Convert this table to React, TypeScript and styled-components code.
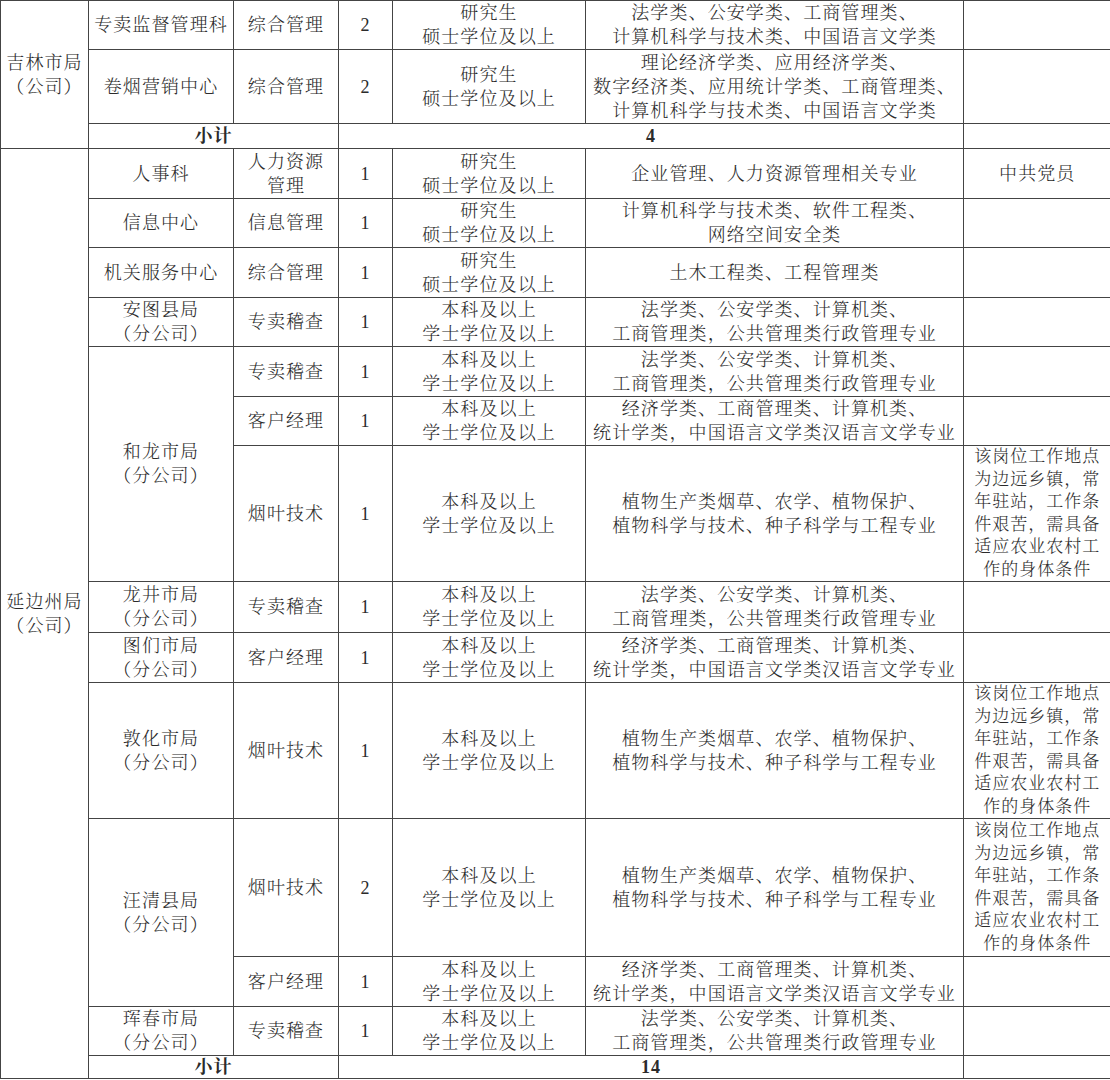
import React from "react";
import styled, { createGlobalStyle } from "styled-components";

const Global = createGlobalStyle`
body{
  margin:0;
  background:#fff;
}
`
const Sheet = styled.table`
width:1110px;
table-layout:fixed;
border-collapse:collapse;
font-family:"Liberation Serif","Noto Serif CJK SC","Noto Sans CJK SC",serif;
color:#2b2b2b;
`
const Row = styled.tr<{h:number}>`
height:${props=>props.h}px;
`
const Cell = styled.td<{bold?:boolean,note?:boolean}>`
border:1px solid #444;
padding:0 2px;
text-align:center;
vertical-align:middle;
white-space:nowrap;
font-size:${props=>props.note?'17px':'18px'};
letter-spacing:${props=>props.note?'1px':'1.1px'};
line-height:${props=>props.note?'22.5px':props.bold?'20px':'24px'};
font-weight:${props=>props.bold?700:300};
&:last-child{
  border-right:none;
}
`

interface C{
  t:string,
  rs?:number,
  cs?:number,
  bold?:boolean,
  note?:boolean
}

const NOTE = "该岗位工作地点\n为边远乡镇，常\n年驻站，工作条\n件艰苦，需具备\n适应农业农村工\n作的身体条件"
const GRAD = "研究生\n硕士学位及以上"
const BACH = "本科及以上\n学士学位及以上"
const LAW = "法学类、公安学类、计算机类、\n工商管理类，公共管理类行政管理专业"
const ECON = "经济学类、工商管理类、计算机类、\n统计学类，中国语言文学类汉语言文学专业"
const PLANT = "植物生产类烟草、农学、植物保护、\n植物科学与技术、种子科学与工程专业"

const rows:{h:number,cells:C[]}[] = [
  {h:49,cells:[{t:"吉林市局\n（公司）",rs:3},{t:"专卖监督管理科"},{t:"综合管理"},{t:"2"},{t:GRAD},{t:"法学类、公安学类、工商管理类、\n计算机科学与技术类、中国语言文学类"},{t:""}]},
  {h:74,cells:[{t:"卷烟营销中心"},{t:"综合管理"},{t:"2"},{t:GRAD},{t:"理论经济学类、应用经济学类、\n数字经济类、应用统计学类、工商管理类、\n计算机科学与技术类、中国语言文学类"},{t:""}]},
  {h:25,cells:[{t:"小计",cs:2,bold:true},{t:"4",cs:3,bold:true},{t:""}]},
  {h:50,cells:[{t:"延边州局\n（公司）",rs:14},{t:"人事科"},{t:"人力资源\n管理"},{t:"1"},{t:GRAD},{t:"企业管理、人力资源管理相关专业"},{t:"中共党员"}]},
  {h:49,cells:[{t:"信息中心"},{t:"信息管理"},{t:"1"},{t:GRAD},{t:"计算机科学与技术类、软件工程类、\n网络空间安全类"},{t:""}]},
  {h:50,cells:[{t:"机关服务中心"},{t:"综合管理"},{t:"1"},{t:GRAD},{t:"土木工程类、工程管理类"},{t:""}]},
  {h:49,cells:[{t:"安图县局\n（分公司）"},{t:"专卖稽查"},{t:"1"},{t:BACH},{t:LAW},{t:""}]},
  {h:50,cells:[{t:"和龙市局\n（分公司）",rs:3},{t:"专卖稽查"},{t:"1"},{t:BACH},{t:LAW},{t:""}]},
  {h:49,cells:[{t:"客户经理"},{t:"1"},{t:BACH},{t:ECON},{t:""}]},
  {h:136,cells:[{t:"烟叶技术"},{t:"1"},{t:BACH},{t:PLANT},{t:NOTE,note:true}]},
  {h:51,cells:[{t:"龙井市局\n（分公司）"},{t:"专卖稽查"},{t:"1"},{t:BACH},{t:LAW},{t:""}]},
  {h:50,cells:[{t:"图们市局\n（分公司）"},{t:"客户经理"},{t:"1"},{t:BACH},{t:ECON},{t:""}]},
  {h:136,cells:[{t:"敦化市局\n（分公司）"},{t:"烟叶技术"},{t:"1"},{t:BACH},{t:PLANT},{t:NOTE,note:true}]},
  {h:138,cells:[{t:"汪清县局\n（分公司）",rs:2},{t:"烟叶技术"},{t:"2"},{t:BACH},{t:PLANT},{t:NOTE,note:true}]},
  {h:50,cells:[{t:"客户经理"},{t:"1"},{t:BACH},{t:ECON},{t:""}]},
  {h:49,cells:[{t:"珲春市局\n（分公司）"},{t:"专卖稽查"},{t:"1"},{t:BACH},{t:LAW},{t:""}]},
  {h:23,cells:[{t:"小计",cs:2,bold:true},{t:"14",cs:3,bold:true},{t:""}]},
]

const widths = [88,145,105,54,193,378,147]

const Lines = ({t}:{t:string}) =>(
  <>
    {t.split("\n").map((l,i)=><div key={i}>{l}</div>)}
  </>
)

export default function App(){
  return (
    <>
      <Global/>
      <Sheet>
        <colgroup>
          {widths.map((w,i)=><col key={i} style={{width:w}}/>)}
        </colgroup>
        <tbody>
          {rows.map((r,i)=>
            <Row h={r.h} key={i}>
              {r.cells.map((c,j)=>
                <Cell key={j} rowSpan={c.rs} colSpan={c.cs} bold={c.bold} note={c.note}>
                  <Lines t={c.t}/>
                </Cell>
              )}
            </Row>
          )}
        </tbody>
      </Sheet>
    </>
  )
}
